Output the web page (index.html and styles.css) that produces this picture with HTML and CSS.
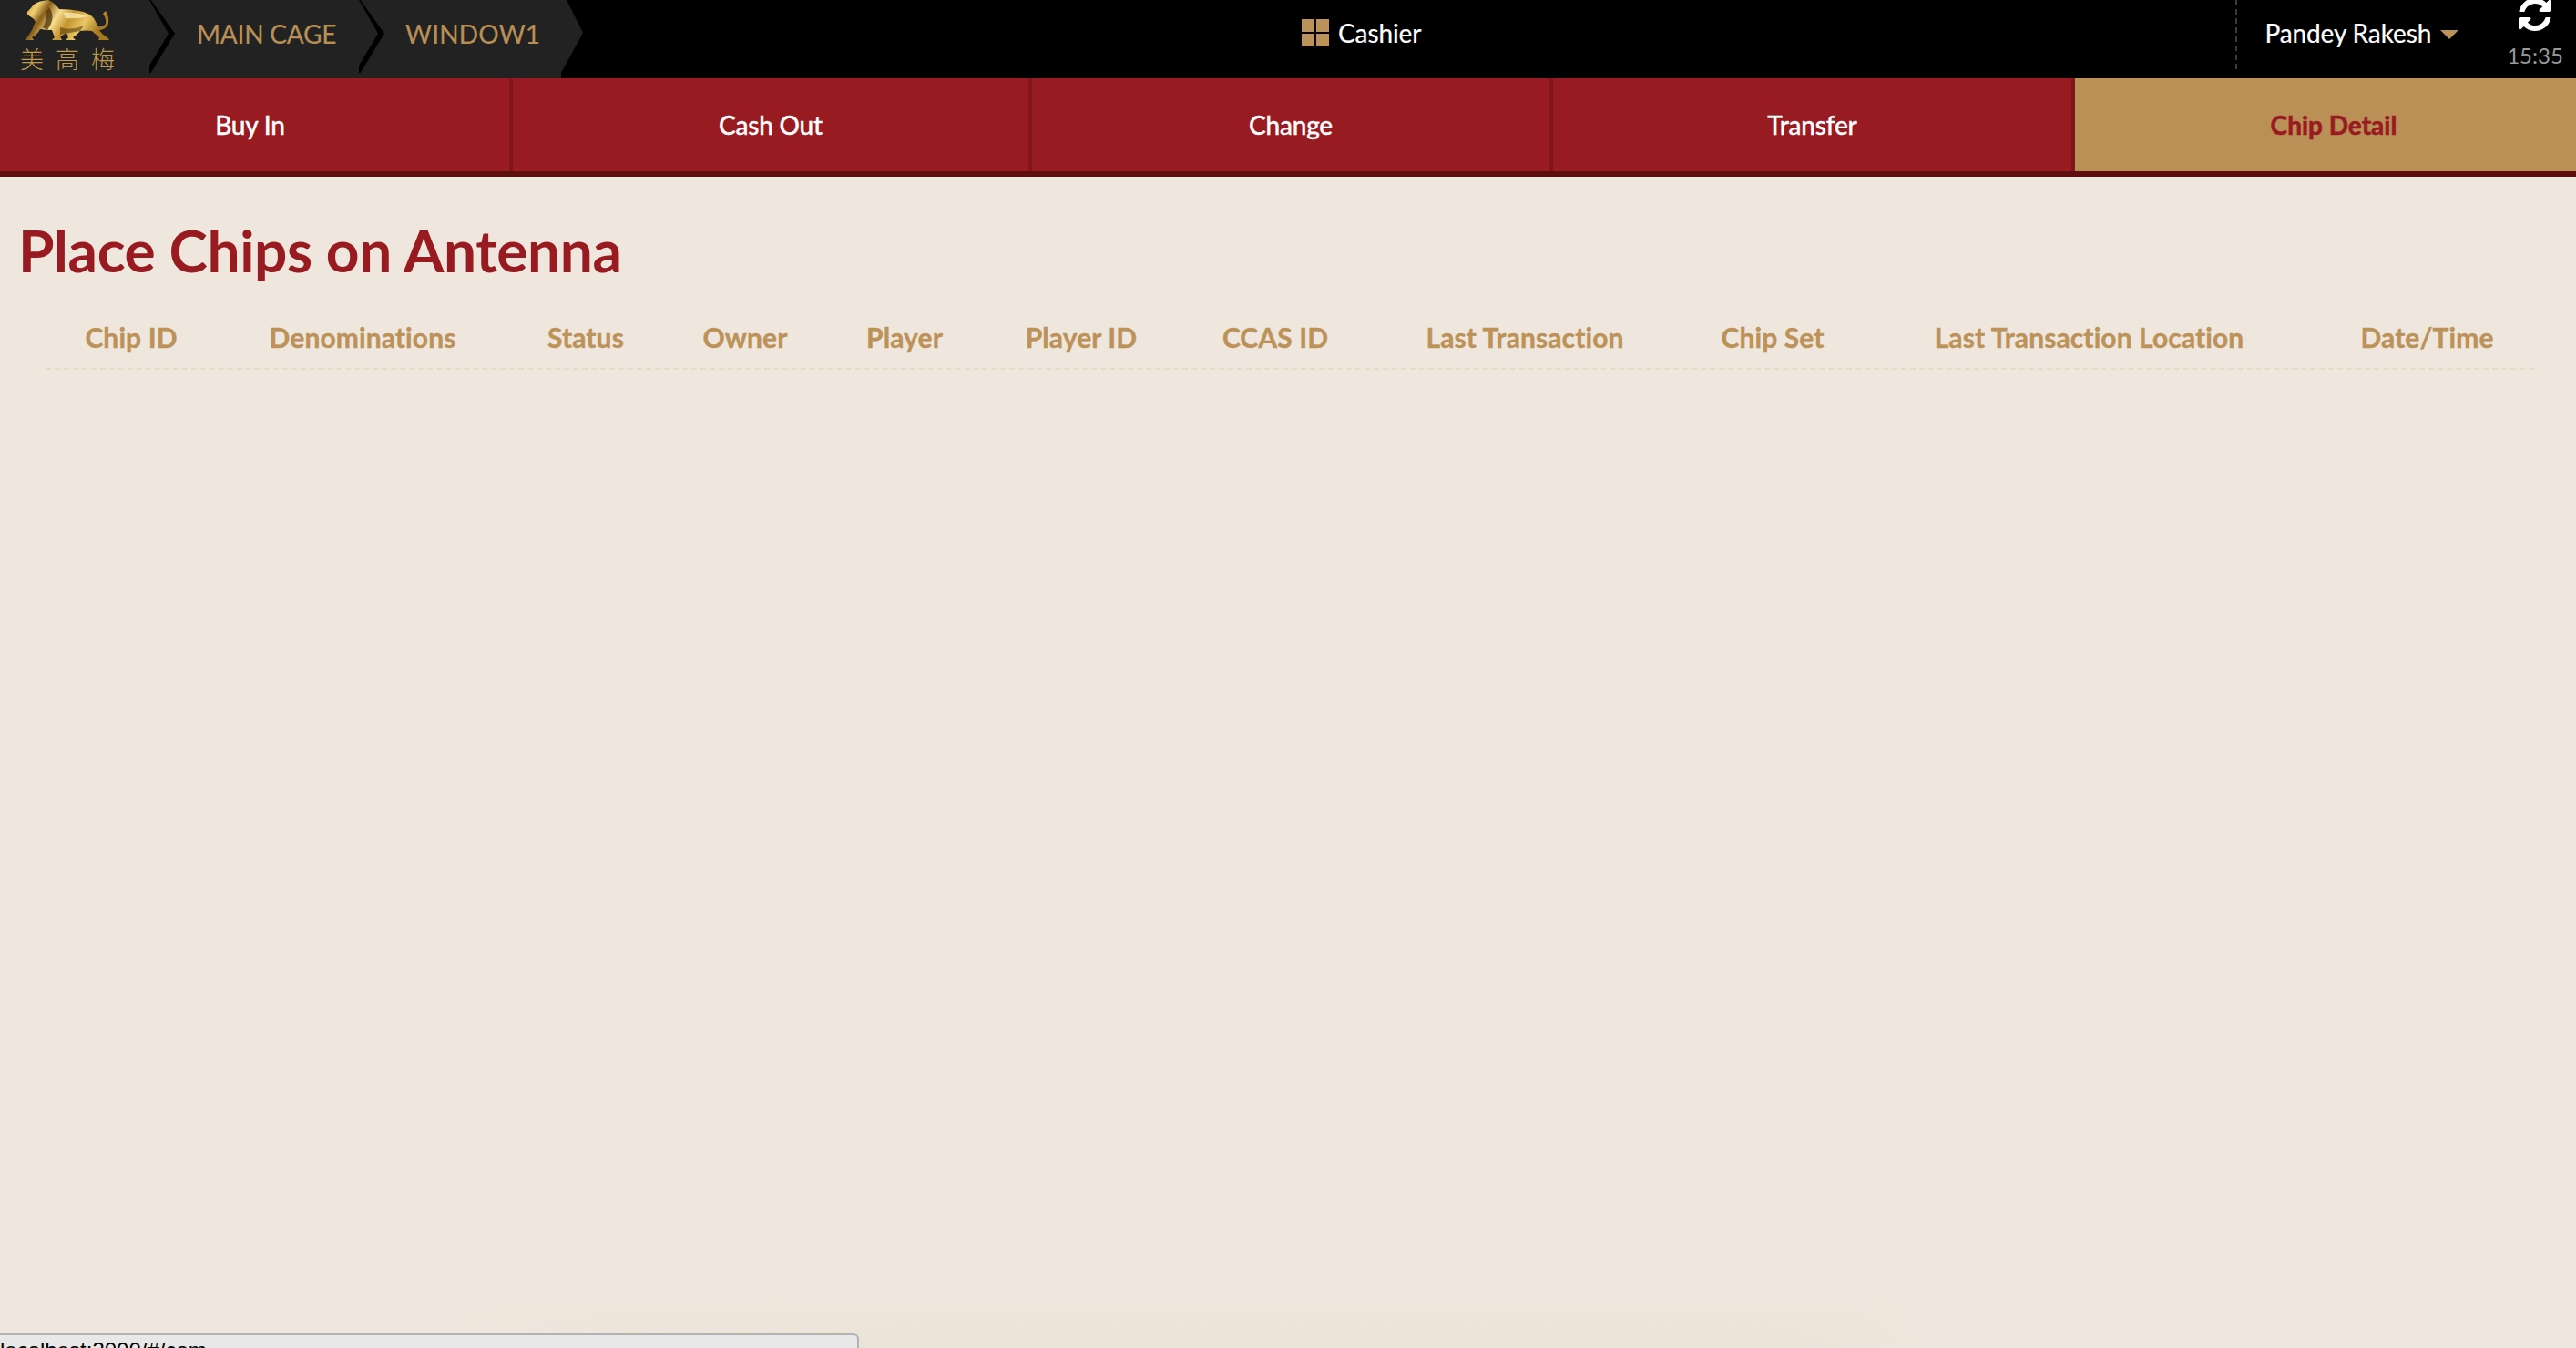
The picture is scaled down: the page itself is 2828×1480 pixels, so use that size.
FILE: index.html
```html
<!DOCTYPE html>
<html>
<head>
  <meta charset="utf-8">
  <title>Chip Detail</title>
  <link rel="stylesheet" href="styles.css">
</head>
<body>
  <header class="topbar">
    <div class="crumbs">
      <div class="crumb crumb-logo">
        <svg class="lion" viewBox="0 0 130 46" width="130" height="46">
          <defs>
            <linearGradient id="gold" x1="0" y1="0" x2="1" y2="0.3">
              <stop offset="0" stop-color="#c2922f"/>
              <stop offset="0.18" stop-color="#f0cf73"/>
              <stop offset="0.3" stop-color="#8a5f18"/>
              <stop offset="0.46" stop-color="#f6dd8e"/>
              <stop offset="0.62" stop-color="#c4942f"/>
              <stop offset="0.8" stop-color="#eac766"/>
              <stop offset="1" stop-color="#a87b22"/>
            </linearGradient>
          </defs>
          <path fill="url(#gold)" d="M30 13 Q34 9 37 5 Q42 1 53 0 Q60 3 65 10 Q76 10 87 12 Q98 14 103 20 Q106 26 108 29 Q113 30 116 26 Q117 21 113 15 L116 12 Q120 18 119 26 Q116 33 109 33 Q112 38 118 41 L120 44 L108 44 L109 41 Q104 37 101 34 Q94 33 88 34 Q85 38 80 41 L83 44 L72 44 L75 41 L73 36 Q70 38 66 40 L68 44 L57 44 L60 41 L57 33 Q50 33 44 32 Q41 38 35 41 L37 44 L27 44 L30 41 Q36 33 39 24 Q37 20 33 18 Q29 16 30 13 Z"/>
          <path fill="#fbeeb8" opacity="0.75" d="M70 14 Q84 13 96 18 Q86 21 72 20 Z"/>
          <path fill="#4f330b" opacity="0.75" d="M54 8 Q60 16 56 26 L52 33 L47 30 Q52 22 50 14 Z"/>
          <path fill="#4f330b" opacity="0.55" d="M66 30 Q78 34 92 28 L88 34 L76 36 L66 38 Z"/>
        </svg>
        <div class="logo-chars"><span>美</span><span>高</span><span>梅</span></div>
      </div>
      <div class="crumb crumb-main">MAIN CAGE</div>
      <div class="crumb crumb-window">WINDOW1</div>
    </div>

    <div class="role">
      <span class="role-icon"><i></i><i></i><i></i><i></i></span>
      <span>Cashier</span>
    </div>

    <div class="user">
      <span class="user-name">Pandey Rakesh</span>
      <span class="caret"></span>
    </div>

    <div class="clock">
      <svg class="refresh" viewBox="0 0 1792 1792" width="42" height="42">
        <path fill="#fff" d="M1639 1056q0 5-1 7-64 268-268 434.500t-478 166.500q-146 0-282.500-55t-243.500-157l-129 129q-19 19-45 19t-45-19-19-45v-448q0-26 19-45t45-19h448q26 0 45 19t19 45-19 45l-137 137q71 66 161 102t187 36q134 0 250-65t186-179q11-17 53-117 8-23 30-23h192q13 0 22.500 9.500t9.500 22.500zm25-800v448q0 26-19 45t-45 19h-448q-26 0-45-19t-19-45 19-45l138-138q-148-137-349-137-134 0-250 65t-186 179q-11 17-53 117-8 23-30 23h-199q-13 0-22.500-9.500t-9.500-22.500v-7q65-268 270-434.500t480-166.500q146 0 284 55.500t245 156.500l130-129q19-19 45-19t45 19 19 45z"/>
      </svg>
      <span class="time">15:35</span>
    </div>
  </header>

  <nav class="tabs">
    <a class="tab tab-first">Buy In</a>
    <a class="tab">Cash Out</a>
    <a class="tab">Change</a>
    <a class="tab">Transfer</a>
    <a class="tab tab-active">Chip Detail</a>
  </nav>

  <main class="content">
    <h1 class="title">Place Chips on Antenna</h1>
    <div class="chip-head">
      <div>Chip ID</div>
      <div>Denominations</div>
      <div>Status</div>
      <div>Owner</div>
      <div>Player</div>
      <div>Player ID</div>
      <div>CCAS ID</div>
      <div>Last Transaction</div>
      <div>Chip Set</div>
      <div>Last Transaction Location</div>
      <div class="chip-head-last">Date/Time</div>
    </div>
  </main>

  <div class="bottom-shade"></div>
  <div class="status-bubble">localhost:3000/#/cam</div>
</body>
</html>
```

FILE: styles.css
```css
html, body {
  margin: 0;
  height: 100%;
  overflow: hidden;
}

body {
  position: relative;
  background: #efe7dd;
  font-family: Lato, "Noto Sans CJK SC", sans-serif;
}

/* top black bar */
.topbar {
  display: flex;
  height: 86px;
  background: #000;
  color: #fff;
}

.crumbs {
  display: flex;
  width: 640px;
}

.crumb {
  position: relative;
  height: 86px;
  background: #222;
  color: #b98f55;
  font-size: 28px;
  letter-spacing: -0.2px;
  line-height: 74px;
  box-sizing: border-box;
  -webkit-text-stroke: 0.2px #b98f55;
}

.crumb::after {
  content: "";
  position: absolute;
  top: 0;
  right: 0;
  width: 28px;
  height: 80px;
  background: #000;
  clip-path: polygon(0 0, 6% 0, 100% 46%, 6% 100%, 0 100%, 0 90%, 75% 46%);
}

.crumb-logo {
  width: 192px;
  -webkit-text-stroke: 0;
}

.lion {
  display: block;
}

.logo-chars {
  display: flex;
  gap: 13px;
  padding: 5px 0 0 22px;
  color: #c29a4c;
  font-size: 26px;
  font-weight: 300;
  line-height: 28px;
  letter-spacing: 0;
}

.crumb-main {
  width: 230px;
  padding-left: 24px;
}

.crumb-window {
  width: 218px;
  padding-left: 23px;
  background: transparent;
  isolation: isolate;
  letter-spacing: 0.2px;
}

.crumb-window::before {
  content: "";
  position: absolute;
  z-index: -1;
  top: 0;
  left: 0;
  width: 218px;
  height: 86px;
  background: #222;
  clip-path: polygon(0 0, 200px 0, 218px 36px, 194px 80px, 194px 86px, 0 86px);
}

.crumb-window::after {
  display: none;
}

.role {
  display: flex;
  align-items: center;
  gap: 10px;
  height: 72px;
  margin-left: 789px;
  font-size: 28px;
  letter-spacing: -0.1px;
  -webkit-text-stroke: 0.2px #fff;
}

.role-icon {
  display: grid;
  grid-template-columns: 14px 14px;
  grid-template-rows: 14px 14px;
  gap: 2px;
}

.role-icon i {
  background: #bc9258;
}

.user {
  display: flex;
  align-items: center;
  gap: 10px;
  height: 76px;
  margin-left: 894px;
  padding-left: 30px;
  border-left: 2px dashed #3a3a3a;
  font-size: 28px;
  letter-spacing: -0.1px;
  line-height: 72px;
  -webkit-text-stroke: 0.2px #fff;
}

.user-name {
  margin-top: -4px;
}

.caret {
  width: 0;
  height: 0;
  margin-top: -1px;
  border-left: 10px solid transparent;
  border-right: 10px solid transparent;
  border-top: 10px solid #bc9258;
}

.clock {
  display: flex;
  flex-direction: column;
  align-items: center;
  margin-left: 53px;
}

.refresh {
  margin-top: -5px;
}

.time {
  margin-top: 9px;
  color: #999;
  font-size: 24px;
  line-height: 30px;
}

/* red tabs */
.tabs {
  display: grid;
  grid-template-columns: 563px 570px 572px 573px 1fr;
  height: 102px;
  border-bottom: 6px solid #5f0e0e;
  background: #991b22;
}

.tab {
  border-right: 4px solid #7f161b;
  color: #fff;
  font-size: 28px;
  font-weight: 500;
  letter-spacing: -0.2px;
  line-height: 102px;
  text-align: center;
  -webkit-text-stroke: 0.35px #fff;
}

.tab-first {
  padding-right: 10px;
}

.tab-active {
  padding-left: 18px;
  border-right: 0;
  background: #ba9056;
  color: #991b22;
  font-weight: 700;
  letter-spacing: 0;
  -webkit-text-stroke: 0.6px #991b22;
}

/* chip list */
.content {
  padding: 0 46px 0 20px;
}

.title {
  margin: 0;
  padding-top: 42px;
  color: #991b22;
  font-size: 64px;
  font-weight: 700;
  letter-spacing: -0.4px;
  line-height: 78px;
}

.chip-head {
  display: grid;
  grid-template-columns: 188px 320px 170px 180px 170px 218px 208px 340px 204px 491px 1fr;
  margin: 36px 0 0 30px;
  padding-bottom: 14px;
  border-bottom: 2px dashed #e6dcc6;
  color: #bc9258;
  font-size: 30px;
  font-weight: 700;
  letter-spacing: 0.1px;
  line-height: 40px;
  text-align: center;
  -webkit-text-stroke: 0.4px #bc9258;
}

.chip-head-last {
  padding-left: 8px;
}

/* browser leftovers at the bottom of the window */
.bottom-shade {
  position: absolute;
  left: 500px;
  bottom: 0;
  width: 1600px;
  height: 50px;
  background: linear-gradient(to bottom, rgba(233, 225, 213, 0), #eae2d7);
  -webkit-mask-image: linear-gradient(to right, transparent, #000 30%, #000 90%, transparent);
  mask-image: linear-gradient(to right, transparent, #000 30%, #000 90%, transparent);
}

.status-bubble {
  position: absolute;
  left: 0;
  top: 1464px;
  width: 941px;
  height: 30px;
  padding-top: 3px;
  border-top: 2px solid #b3b3b3;
  border-right: 2px solid #b3b3b3;
  border-top-right-radius: 6px;
  background: #e8e8e8;
  color: #000;
  font-family: "Liberation Sans", sans-serif;
  font-size: 24px;
  line-height: 28px;
  white-space: nowrap;
}
```
